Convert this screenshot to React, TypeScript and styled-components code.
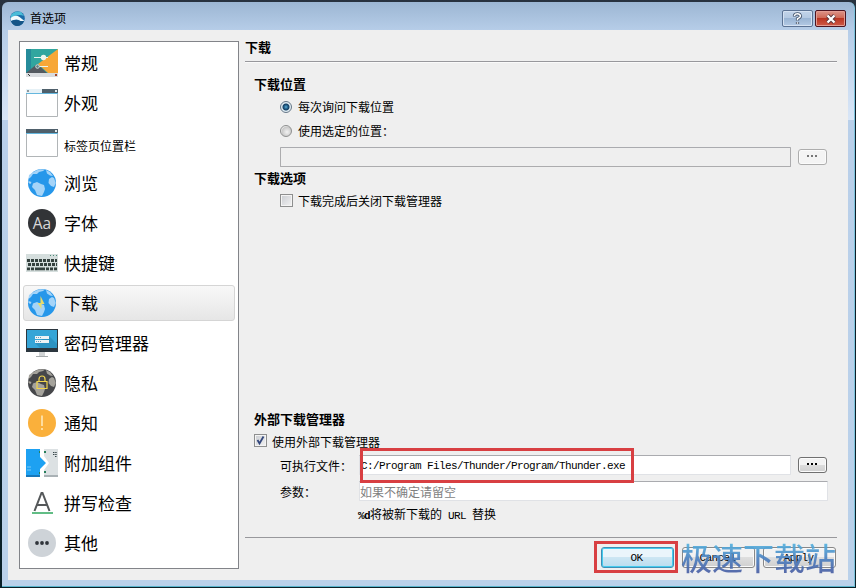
import React from "react";
import styled, { createGlobalStyle, css } from "styled-components";

const GlobalStyle = createGlobalStyle`
  * { box-sizing: border-box; }
  body {
    margin: 0;
    overflow: hidden;
    background: #10222c;
    font-family: "Noto Sans CJK SC", sans-serif;
    color: #000;
  }
`;

const mono = css`
  font-family: "Liberation Mono", "Noto Sans CJK SC", monospace;
  font-size: 11px;
  letter-spacing: -0.6px;
`;

const Window = styled.div`
  position: relative;
  width: 856px;
  height: 588px;
  padding: 2px 1px 1px 2px;
  background: linear-gradient(#28323f, #101c28 80px, #0a2028);
`;

const Frame = styled.div`
  height: 585px;
  display: flex;
  flex-direction: column;
  padding: 0 6px 6px;
  border-radius: 6px 6px 0 0;
  border-right: 1px solid #7cc3dc;
  border-bottom: 1px solid #58b4cc;
  background: linear-gradient(#9cb6d3 0, #b6cde8 28px, #d9e6f7 118px, #b9cfe9 118px, #bad1ea 100%);
`;

const TitleBar = styled.header`
  flex: none;
  height: 28px;
  display: flex;
  padding: 0 2px;
`;

const TitleIcon = styled.svg`
  margin: 9px 5px 0 0;
  width: 15px;
  height: 15px;
`;

const TitleText = styled.div`
  flex: 1;
  margin-top: 7px;
  line-height: 18px;
  font-size: 12px;
`;

const CaptionButton = styled.button<{ $close?: boolean }>`
  width: 31px;
  height: 17px;
  margin: 8px 0 0 2px;
  padding: 0;
  display: grid;
  place-items: center;
  border-radius: 2px;
  border: 1px solid ${(p) => (p.$close ? "#4c1420" : "#5b7293")};
  box-shadow: inset 0 0 0 1px ${(p) => (p.$close ? "#e39c92" : "#d5e2f2")};
  background: ${(p) =>
    p.$close
      ? "linear-gradient(#dc9488 0, #cf6a58 45%, #b8321f 46%, #cf5a48 100%)"
      : "linear-gradient(#c3d4e9 0, #b4c9e2 45%, #98b3d2 46%, #b3cae5 100%)"};
`;

const Client = styled.main`
  flex: 1;
  display: flex;
  padding: 11px 11px 11px;
  background: #efefef;
`;

const Sidebar = styled.nav`
  flex: none;
  width: 220px;
  height: 528px;
  padding: 3px;
  display: flex;
  flex-direction: column;
  gap: 4px;
  background: #fff;
  border: 1px solid #828489;
`;

const NavItem = styled.div<{ $active?: boolean; $small?: boolean }>`
  height: 36px;
  width: 212px;
  flex: none;
  display: flex;
  align-items: center;
  padding-left: 2px;
  border: 1px solid ${(p) => (p.$active ? "#d5d5d5" : "transparent")};
  border-radius: 3px;
  background: ${(p) => (p.$active ? "linear-gradient(#f8f8f8, #e6e6e6)" : "none")};
  font-size: ${(p) => (p.$small ? 12 : 17)}px;
  line-height: 24px;
  white-space: nowrap;

  span { padding-top: ${(p) => (p.$small ? 6 : 0)}px; }
`;

const NavIcon = styled.svg`
  flex: none;
  width: 32px;
  height: 28px;
  margin-right: 6px;
`;

const Panel = styled.section`
  width: 592px;
  margin-left: 6px;
  display: flex;
  flex-direction: column;
`;

const PageTitle = styled.h1`
  margin: 0;
  height: 21px;
  border-bottom: 1px solid #98989c;
  box-shadow: 0 1px #fafafa;
  font-size: 13px;
  font-weight: 700;
  line-height: 12px;
`;

const Heading = styled.h2<{ $top: number }>`
  margin: ${(p) => p.$top}px 0 0 9px;
  height: 16px;
  font-size: 13px;
  font-weight: 700;
  line-height: 14px;
`;

const Row = styled.div<{ $indent?: number; $height?: number }>`
  flex: none;
  display: flex;
  align-items: center;
  height: ${(p) => p.$height ?? 24}px;
  padding-left: ${(p) => p.$indent ?? 35}px;
  font-size: 12px;
  white-space: nowrap;
`;

const Caption = styled.span`
  padding-bottom: 2px;
`;

const Radio = styled.span<{ $on?: boolean }>`
  width: 12px;
  height: 12px;
  margin-right: 6px;
  border-radius: 50%;
  border: 1px solid ${(p) => (p.$on ? "#678" : "#8e8f8f")};
  background: ${(p) =>
    p.$on
      ? "radial-gradient(circle at 50% 50%, #5fb0d6 0, #2a6c98 1.5px, #123e62 3px, #e1edf4 4px)"
      : "radial-gradient(circle at 60% 60%, #f2f2f2, #c8c8c8 5px, #eee 6px)"};
`;

const Check = styled.span`
  width: 13px;
  height: 13px;
  margin-right: 5px;
  border: 1px solid #8e8f8f;
  box-shadow: inset 0 0 0 1px #f4f4f4;
  background: linear-gradient(135deg, #c9ccd1, #f3f3f3);
  transform: translateY(-1px);

  svg { display: block; width: 11px; height: 11px; }
`;

const Field = styled.div<{ $width: number; $disabled?: boolean; $hint?: boolean }>`
  width: ${(p) => p.$width}px;
  height: 20px;
  padding-left: 1px;
  border: 1px solid ${(p) => (p.$disabled ? "#acacae" : "#e0e2e6")};
  border-top-color: #aaabaf;
  border-radius: 1px;
  background: ${(p) => (p.$disabled ? "#efefef" : "#fff")};
  line-height: 20px;
  white-space: pre;
  ${(p) => (p.$hint ? "color: #7f7f7f; font-size: 12px; padding-left: 0;" : mono)}
`;

const BrowseButton = styled.button<{ $disabled?: boolean }>`
  width: 29px;
  height: 16px;
  margin-left: 7px;
  padding: 0 2px 3px 0;
  display: flex;
  align-items: center;
  justify-content: center;
  gap: 2px;
  border: 1px solid ${(p) => (p.$disabled ? "#adadad" : "#707070")};
  border-radius: 3px;
  box-shadow: inset 0 0 0 1px #fbfbfb;
  background: ${(p) => (p.$disabled ? "#f4f4f4" : "linear-gradient(#f2f2f2 0 50%, #dcdcdc 50%, #d0d0d0)")};

  i {
    width: 2px;
    height: 2px;
    background: ${(p) => (p.$disabled ? "#777" : "#000")};
  }
`;

const Label = styled.span`
  width: 79px;
`;

const Hint = styled.div`
  flex: none;
  height: 18px;
  margin: -1px 0 0 113px;
  line-height: 17px;
  font-size: 12px;
  white-space: pre;

  b, em { ${mono} font-style: normal; }
`;

const Footer = styled.footer`
  margin-top: 14px;
  padding-top: 9px;
  border-top: 1px solid #98989c;
  display: flex;
  justify-content: flex-end;
  gap: 8px;
  padding-right: 1px;
`;

const DialogButton = styled.button<{ $primary?: boolean }>`
  width: 73px;
  height: 21px;
  padding: 0 2px 0 0;
  ${mono}
  color: #000;
  border-radius: 3px;
  border: 1px solid ${(p) => (p.$primary ? "#3c8fb6" : "#888")};
  box-shadow: inset 0 0 0 1px ${(p) => (p.$primary ? "#45cbee" : "#fafafa")};
  background: ${(p) =>
    p.$primary
      ? "linear-gradient(#eaf5fb 0 48%, #cce6f3 50%, #b9ddef)"
      : "linear-gradient(#f2f2f2 0 48%, #dedede 50%, #d0d0d0)"};
`;

const Marker = styled.div<{ $x: number; $y: number; $w: number; $h: number }>`
  position: absolute;
  left: ${(p) => p.$x}px;
  top: ${(p) => p.$y}px;
  width: ${(p) => p.$w}px;
  height: ${(p) => p.$h}px;
  border: 3px solid #d83f42;
`;

const Watermark = styled.div`
  position: absolute;
  left: 681px;
  top: 539px;
  font-size: 31px;
  font-weight: 500;
  line-height: 36px;
  white-space: nowrap;
  color: transparent;
  background: linear-gradient(#55b4e0 4px, #4e86c4 18px, #4a5fa4 34px);
  background-clip: text;
  opacity: 0.92;
`;

const Globe = ({ dark }: { dark?: boolean }) => (
  <>
    <circle cx="16" cy="14" r="14" fill={dark ? "#46474a" : "#2697ea"} />
    <g fill={dark ? "#a5a39c" : "#a5d4f8"}>
      <path d="M7 14.500 11 13l4 2 3 1 1 4-1 3-2 4-5-1-2-5-3-3z" />
      <path d="M23 10l3-2 2 1 1.800 5-1.800 4-3-1-2.500-3z" />
      <path d="M6 4 10 1.500 14 .2l5 .3-2 1.500-4 1-2 2-4 0-2 3-2.500 2 .5-4z" />
      <path d="M20 1l4 2 3 4-3-.5-3-2zM2.500 12l3 1-1 2-2-1z" />
    </g>
  </>
);

const icons: Record<string, React.ReactNode> = {
  general: (
    <>
      <path fill="#31a69f" d="M0 0h32v24H0z" />
      <path fill="#258b9a" d="M0 0h5v24H0z" />
      <path fill="#f7a737" d="M32 0v24H22L12 15z" />
      <path fill="#545a60" d="M0 24 11 15l10 9z" />
      <path fill="#d9dcdf" d="M0 24h32v4H0z" />
      <path stroke="#e9f5ef" d="M8 8.500h14M10 17.500h12" />
      <circle cx="17.500" cy="8.500" r="2.700" fill="#eef6ee" />
      <circle cx="11.500" cy="17.500" r="1.800" fill="#607d80" stroke="#cfe0dc" />
      <path fill="#333" d="M2 25h1v1h1v1H3v-1H2z" />
      <path fill="#a4482b" d="M29 25h2v2h-2z" />
    </>
  ),
  look: (
    <>
      <path fill="#fff" stroke="#b1b5b7" d="M.5 .5h31v27H.5z" />
      <path fill="#e6f1f6" d="M0 0h16v4H0z" />
      <path fill="#4f606b" d="M16 0h16v4H16z" />
      <path fill="#65b7de" d="M0 4h32v1H0z" />
      <path fill="#8d989d" d="M1 1h2v2H1z" />
      <path fill="#e5eef1" d="M29 1h2v2h-2z" />
    </>
  ),
  tabs: (
    <>
      <path fill="#fff" stroke="#b1b5b7" d="M.5 .5h31v27H.5z" />
      <path fill="#4f606b" d="M0 0h32v4H0z" />
      <path fill="#65b7de" d="M0 4h32v1H0z" />
      <path fill="#e5eef1" d="M29 1h2v2h-2z" />
    </>
  ),
  browse: <Globe />,
  fonts: (
    <>
      <circle cx="16" cy="14" r="14" fill="#323437" />
      <text x="16" y="19.500" fontSize="15.500" textAnchor="middle" fontFamily="Open Sans" fill="#d8d8d8">Aa</text>
    </>
  ),
  keys: (
    <>
      <path fill="#d5dedd" d="M0 5h32v18H0z" />
      <path fill="#4d8b77" d="M24 6h1v1h-1zM27 6h1v1h-1zM30 6h1v1h-1z" />
      <path stroke="#35423f" strokeWidth="2.800" strokeDasharray="3 1" d="M1 11.500h30M2 15.500h29" />
      <path stroke="#35423f" strokeWidth="2.800" d="M1 19.800h3M5 19.800h3M9 19.800h10M20 19.800h3M24 19.800h3M28 19.800h3" />
    </>
  ),
  download: (
    <>
      <Globe />
      <path fill="#e8dc6c" d="M14.500 7v7h-3l4 6v-5h3z" />
    </>
  ),
  passwords: (
    <>
      <path fill="#2c373f" d="M0 0h32v23H0z" />
      <path fill="#36a5d7" d="M1 1h30v18H1z" />
      <path fill="#2c93c2" d="m9 14 14-7 8 8v4H14z" />
      <path fill="#eef3f5" d="M9 7h14v3H9zM9 11h14v3H9z" />
      <path stroke="#739bb0" strokeDasharray="1 1" d="M10 8.500h5M10 12.500h5" />
      <path fill="#d1d4d5" d="M13 23h6v4h-6z" />
      <path fill="#a5aaac" d="M10 27h12v1H10z" />
    </>
  ),
  privacy: (
    <>
      <Globe dark />
      <path fill="none" stroke="#f1d54d" strokeWidth="1.200" d="M11 12.500h10v7H11zM13 12V10a3 3 0 0 1 6 0V12" />
    </>
  ),
  notify: (
    <>
      <circle cx="16" cy="14" r="14" fill="#fab03b" />
      <path fill="#fff1c9" d="M15.300 6.500h1.400v10.500h-1.400zM15.300 19h1.400v2h-1.400z" />
    </>
  ),
  addons: (
    <>
      <path fill="#dce1e3" d="M18 0h14v28H18v-7l5-7-5-7z" />
      <path fill="#a9b1b5" d="M18 26h14v2H18z" />
      <path fill="#1da1f2" d="M0 0h14v8l6 6-6 6v8H0z" />
      <path fill="#1677ba" d="M0 26h14v2H0z" />
      <path stroke="#79c9f6" d="M2 17v6M4 17v6" strokeDasharray="2 1" />
      <path stroke="#39474b" d="M27 3.500h4M27 5.500h4M29 7.500h2" strokeDasharray="1.500 .7" />
      <path fill="#277e5b" d="M13 2h1v2h-1zM13 23h1v2h-1zM18 2h2v2h-2zM18 22h2v2h-2z" />
    </>
  ),
  spelling: (
    <>
      <path fill="none" stroke="#55585a" strokeWidth="2" d="m8.500 22 7-18h1l7 18M11 16h10" />
      <path fill="#61bd85" d="M6 23h21v2H6z" />
    </>
  ),
  other: (
    <>
      <circle cx="16" cy="14" r="14" fill="#ced3d8" />
      <g fill="#30343a">
        <circle cx="11" cy="14" r="1.900" />
        <circle cx="16" cy="14" r="1.900" />
        <circle cx="21" cy="14" r="1.900" />
      </g>
    </>
  ),
};

const items = [
  ["general", "常规"],
  ["look", "外观"],
  ["tabs", "标签页位置栏"],
  ["browse", "浏览"],
  ["fonts", "字体"],
  ["keys", "快捷键"],
  ["download", "下载"],
  ["passwords", "密码管理器"],
  ["privacy", "隐私"],
  ["notify", "通知"],
  ["addons", "附加组件"],
  ["spelling", "拼写检查"],
  ["other", "其他"],
];

const Dots = () => (
  <>
    <i />
    <i />
    <i />
  </>
);

export default function App() {
  return (
    <Window>
      <GlobalStyle />
      <Frame>
        <TitleBar>
          <TitleIcon viewBox="0 0 15 15">
            <circle cx="7.500" cy="7.500" r="7.300" fill="#1b6ca8" />
            <path fill="#49bcd8" d="M1 4Q5-1 11 1l3 4Q8 2 1 7z" />
            <path fill="#f3fafc" d="M.5 7q5-4 9-1l5 4-4 0Q7 7 1 10z" />
            <path fill="#155587" d="M1 10q5-2 9 0l4 0q-2 5-7 5-4 0-6-5z" />
          </TitleIcon>
          <TitleText>首选项</TitleText>
          <CaptionButton aria-label="Help">
            <svg width="11" height="13" viewBox="0 0 11 13" fill="none">
              <path d="M2.500 4.500V3.500Q3 1.800 5.500 1.800T8.500 4Q8.500 5.500 5.500 6.800V8.500M5.500 10v2" stroke="#45556c" strokeWidth="3.200" />
              <path d="M2.500 4V3.500Q3 1.800 5.500 1.800T8.500 4Q8.500 5.500 5.500 6.800V8.200M5.500 10.300v1.400" stroke="#fff" strokeWidth="1.500" />
            </svg>
          </CaptionButton>
          <CaptionButton $close aria-label="Close">
            <svg width="12" height="10" viewBox="0 0 12 10">
              <path d="m2.500 1.500 7 7m0-7-7 7" stroke="#58373d" strokeWidth="4" />
              <path d="m2.500 1.500 7 7m0-7-7 7" stroke="#fff" strokeWidth="2.300" />
            </svg>
          </CaptionButton>
        </TitleBar>
        <Client>
          <Sidebar>
            {items.map(([id, label]) => (
              <NavItem key={id} $active={id === "download"} $small={id === "tabs"}>
                <NavIcon viewBox="0 0 32 28">{icons[id]}</NavIcon>
                <span>{label}</span>
              </NavItem>
            ))}
          </Sidebar>
          <Panel>
            <PageTitle>下载</PageTitle>
            <Heading $top={15}>下载位置</Heading>
            <Row $height={28}>
              <Radio $on />
              <Caption>每次询问下载位置</Caption>
            </Row>
            <Row $height={20}>
              <Radio />
              <Caption>使用选定的位置：</Caption>
            </Row>
            <Row $height={32}>
              <Field $width={511} $disabled />
              <BrowseButton $disabled>
                <Dots />
              </BrowseButton>
            </Row>
            <Heading $top={-2}>下载选项</Heading>
            <Row $height={28}>
              <Check />
              <Caption>下载完成后关闭下载管理器</Caption>
            </Row>
            <Heading $top={197}>外部下载管理器</Heading>
            <Row $indent={9} $height={26}>
              <Check>
                <svg viewBox="0 0 11 11">
                  <path d="m2.500 5 2 3.500 4-7" fill="none" stroke="#33477c" strokeWidth="1.800" />
                </svg>
              </Check>
              使用外部下载管理器
            </Row>
            <Row $height={22}>
              <Label>可执行文件：</Label>
              <Field $width={432}>C:/Program Files/Thunder/Program/Thunder.exe</Field>
              <BrowseButton>
                <Dots />
              </BrowseButton>
            </Row>
            <Row $height={30}>
              <Label>参数：</Label>
              <Field $width={469} $hint>
                如果不确定请留空
              </Field>
            </Row>
            <Hint>
              <b>%d</b>将被新下载的<em> URL </em>替换
            </Hint>
            <Footer>
              <DialogButton $primary>OK</DialogButton>
              <DialogButton>Cancel</DialogButton>
              <DialogButton>Apply</DialogButton>
            </Footer>
          </Panel>
        </Client>
      </Frame>
      <Marker $x={360} $y={448} $w={274} $h={35} />
      <Marker $x={594} $y={541} $w={84} $h={32} />
      <Watermark>极速下载站</Watermark>
    </Window>
  );
}
